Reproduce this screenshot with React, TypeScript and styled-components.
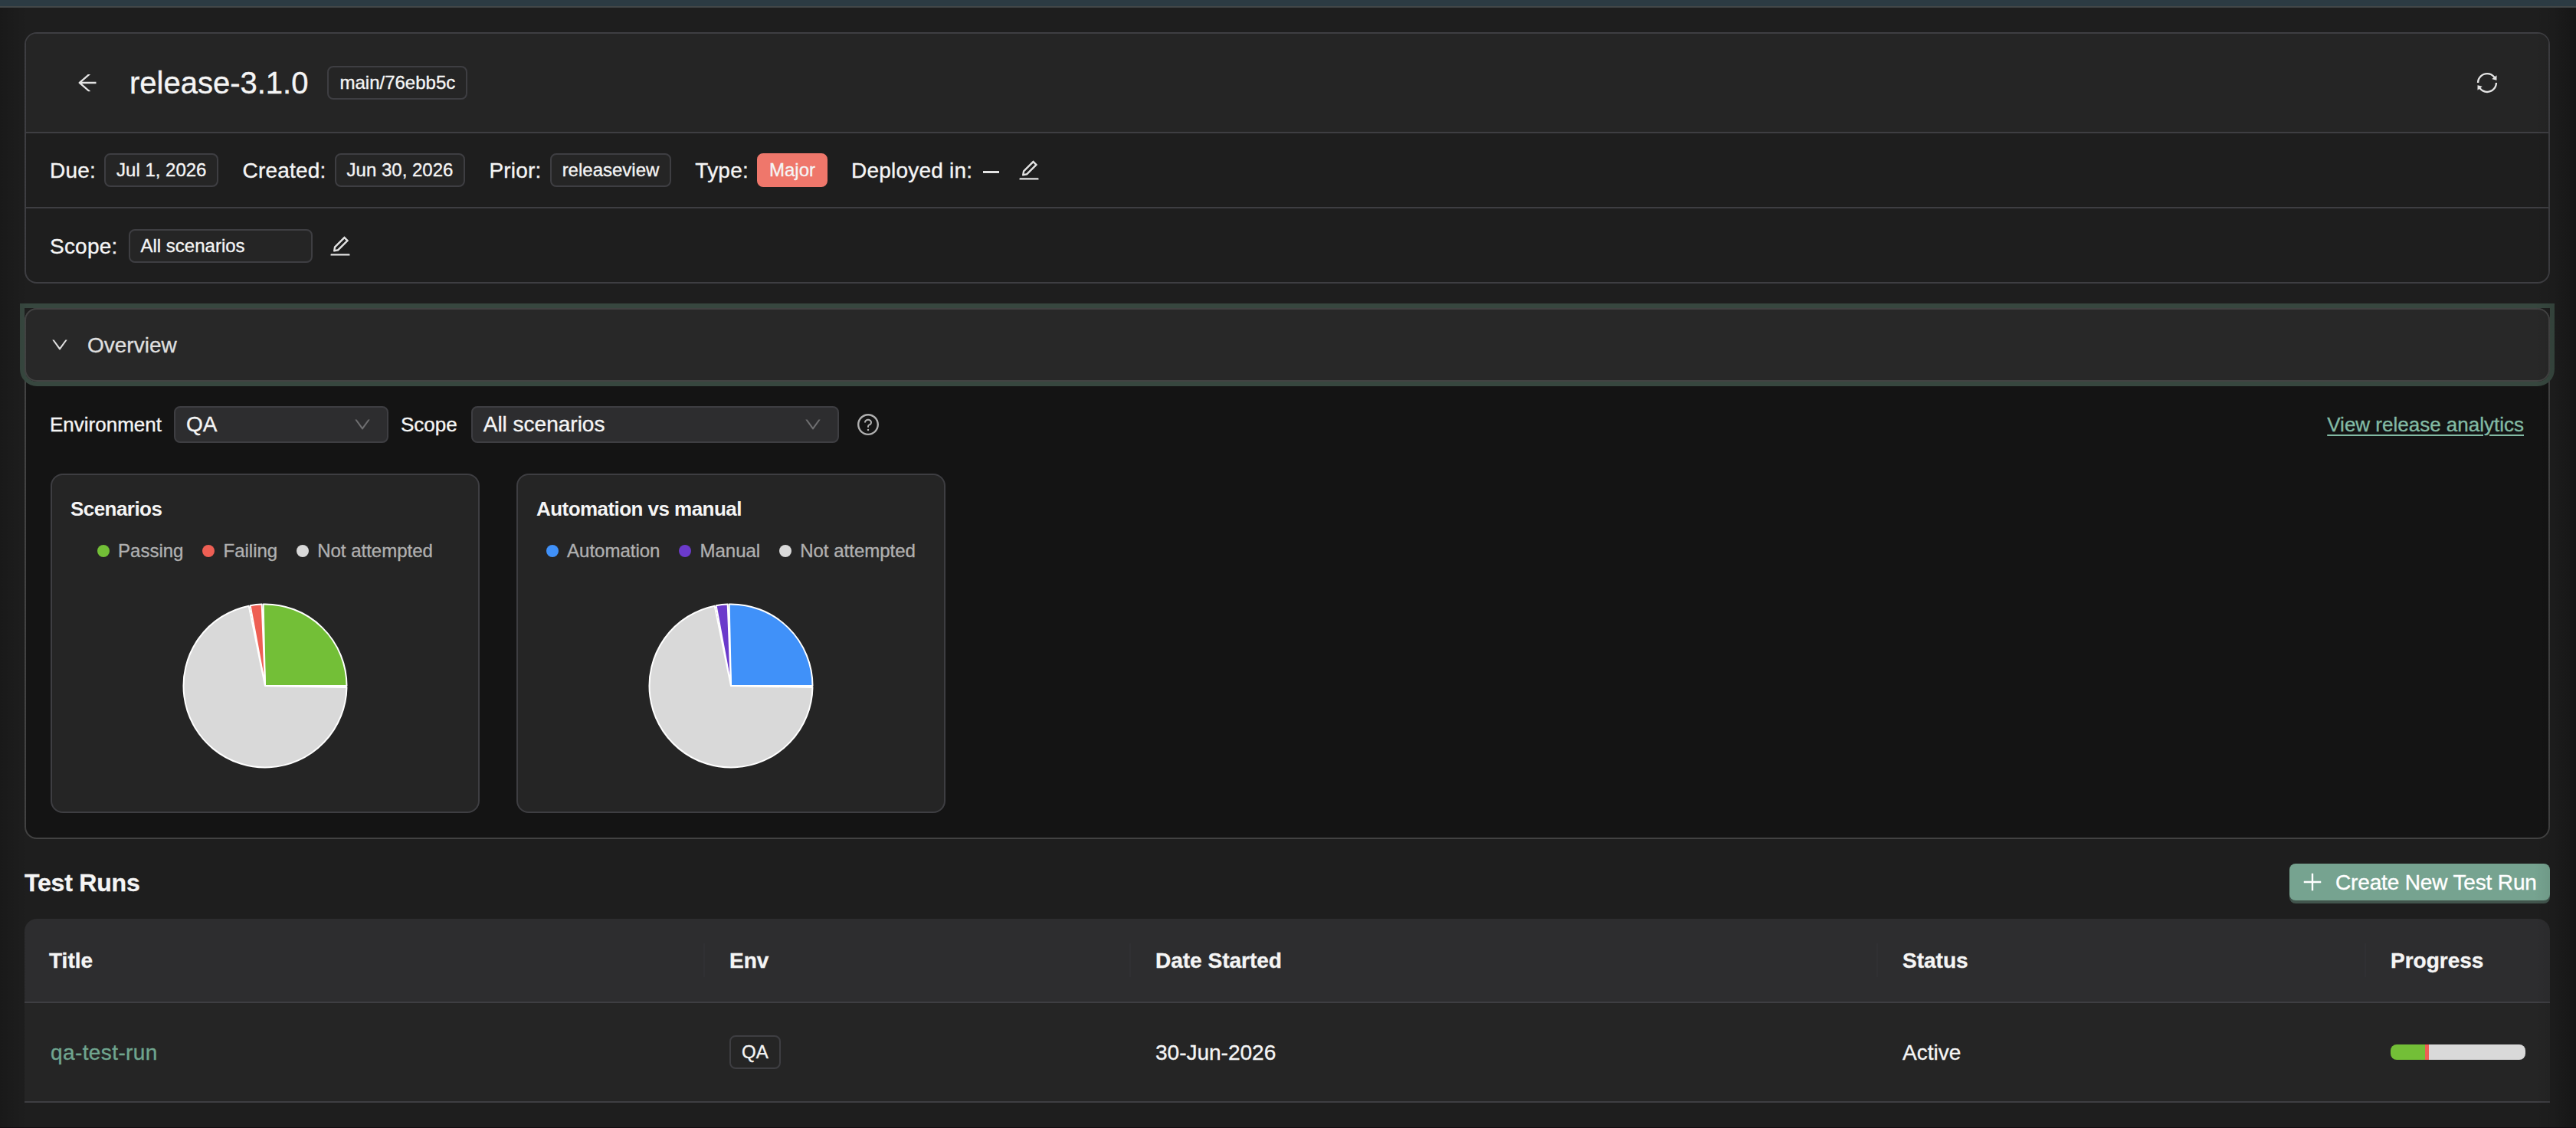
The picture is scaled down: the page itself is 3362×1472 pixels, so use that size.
import React from 'react';
import styled, { createGlobalStyle } from 'styled-components';
import {
  AiOutlineArrowLeft,
  AiOutlineSync,
  AiOutlineEdit,
  AiOutlineDown,
  AiOutlineQuestionCircle,
  AiOutlinePlus,
} from 'react-icons/ai';

const colors = {
  page: '#1e1e1e',
  card: '#252525',
  panel: '#141414',
  raised: '#2d2d2f',
  border: '#3e3e42',
  text: '#f5f5f5',
  muted: '#b0b0b0',
  green: '#73bf37',
  red: '#ee5f54',
  blue: '#4091f9',
  purple: '#6b3acb',
  grey: '#d9d9d9',
};

const GlobalStyle = createGlobalStyle`
  * {
    box-sizing: border-box;
  }
  body {
    margin: 0;
    background: ${colors.page};
    color: ${colors.text};
    font-family: "Liberation Sans", Helvetica, Arial, sans-serif;
    font-size: 28px;
    line-height: 44px;
    -webkit-text-stroke: 0.35px;
  }
`;

const Page = styled.div`
  position: relative;
  height: 1472px;
  overflow: hidden;
  border-bottom: 1px solid #120d11;
`;

const TopBar = styled.div`
  height: 10px;
  background: #2c3b43;
  border-bottom: 2px solid #424748;
`;

// darkens the page towards its left and right edges
const EdgeShade = styled.div`
  position: absolute;
  inset: 10px 0 0;
  pointer-events: none;
  background: linear-gradient(
    to right,
    rgba(0, 0, 0, 0.17),
    rgba(0, 0, 0, 0) 36px,
    rgba(0, 0, 0, 0) calc(100% - 54px),
    rgba(0, 0, 0, 0.07) calc(100% - 30px),
    rgba(0, 0, 0, 0.28)
  );
`;

const Content = styled.main`
  padding: 32px 34px 0 32px;
`;

const ReleaseCard = styled.section`
  height: 328px;
  border: 2px solid ${colors.border};
  border-radius: 16px;
  overflow: hidden;
`;

const ReleaseHeader = styled.header`
  display: flex;
  align-items: center;
  height: 130px;
  padding: 0 64px;
  background: ${colors.card};
  border-bottom: 2px solid ${colors.border};

  h1 {
    margin: 0 25px 0 39px;
    font-size: 40px;
    font-weight: 400;
  }
`;

const IconButton = styled.button<{ $right?: boolean }>`
  display: flex;
  padding: 0;
  border: 0;
  background: none;
  color: #e3e3e3;
  font-size: 32px;
  margin-left: ${({ $right }) => ($right ? 'auto' : '0')};
`;

const MetaRow = styled.div`
  display: flex;
  align-items: center;
  gap: 31px;
  height: 96px;
  padding: 0 31px;

  & + & {
    height: 98px;
    gap: 20px;
    padding-top: 2px;
    border-top: 2px solid ${colors.border};
  }
`;

const Field = styled.div`
  display: flex;
  align-items: center;
  gap: 11px;
`;

const Label = styled.span`
  padding-top: 1px;
  letter-spacing: 0.22px;
`;

const Tag = styled.span<{ $fill?: string; $wide?: boolean }>`
  height: 44px;
  width: ${({ $wide }) => ($wide ? '240px' : 'auto')};
  margin-left: ${({ $wide }) => ($wide ? '3px' : '0')};
  padding: 0 14px;
  border: 2px solid ${({ $fill }) => $fill || colors.border};
  border-radius: 8px;
  background: ${({ $fill }) => $fill || colors.card};
  font-size: 24px;
  line-height: 40px;
`;

const Dash = styled.span`
  width: 21px;
  height: 3px;
  margin: 4px 12px 0 3px;
  background: #e3e3e3;
`;

const Overview = styled.section`
  height: 693px;
  margin-top: 32px;
  border: 2px solid #424242;
  border-radius: 16px;
  background: ${colors.panel};
`;

const FocusRing = styled.div`
  margin: -2px -2px 0;
  border-radius: 0 0 16px 16px;
  box-shadow: 0 0 0 6px #37473f;
`;

const OverviewHeader = styled.div`
  display: flex;
  align-items: center;
  gap: 23px;
  height: 96px;
  padding: 0 31px;
  border: 2px solid #424242;
  border-radius: 16px;
  background: #282828;
  color: #dfdfdf;
`;

const Filters = styled.div`
  display: flex;
  align-items: center;
  gap: 16px;
  padding: 32px 32px 0 31px;
  font-size: 26px;
`;

const ScopeLabel = styled.span`
  margin-right: 2px;
`;

const Select = styled.div<{ $width: number }>`
  display: flex;
  align-items: center;
  justify-content: space-between;
  width: ${({ $width }) => $width}px;
  height: 48px;
  padding: 0 19px 0 14px;
  border: 2px solid ${colors.border};
  border-radius: 8px;
  background: ${colors.raised};
  font-size: 28px;

  svg {
    color: #6e6e70;
    font-size: 26px;
  }
`;

const HelpIcon = styled(AiOutlineQuestionCircle)`
  margin-left: 6px;
  color: ${colors.muted};
  font-size: 32px;
`;

const AnalyticsLink = styled.a`
  margin-left: auto;
  color: #82baa4;
  text-decoration: underline;
  text-decoration-thickness: 2px;
  text-underline-offset: 4px;
`;

const Charts = styled.div`
  display: flex;
  gap: 48px;
  padding: 40px 32px 0;
`;

const ChartCard = styled.article`
  width: 560px;
  height: 443px;
  padding: 22px 24px;
  border: 2px solid ${colors.border};
  border-radius: 16px;
  background: ${colors.card};

  h3 {
    margin: 0;
    font-size: 26px;
    letter-spacing: -0.55px;
    -webkit-text-stroke: 0;
  }
`;

const Legend = styled.div`
  display: flex;
  justify-content: center;
  gap: 25px;
  margin-top: 11px;
  color: ${colors.muted};
  font-size: 24px;
`;

const LegendItem = styled.span<{ $color: string }>`
  display: flex;
  align-items: center;
  gap: 11px;
  white-space: nowrap;

  &::before {
    content: '';
    width: 16px;
    height: 16px;
    border-radius: 50%;
    background: ${({ $color }) => $color};
  }
`;

const Pie = styled.svg`
  display: block;
  margin: 46px auto 0;
`;

const RunsHeader = styled.div`
  display: flex;
  align-items: center;
  justify-content: space-between;
  margin-top: 32px;

  h2 {
    margin: 0;
    padding-top: 2px;
    font-size: 32px;
    letter-spacing: -0.2px;
  }
`;

const CreateButton = styled.button`
  display: flex;
  align-items: center;
  gap: 14px;
  width: 340px;
  height: 48px;
  padding: 0 14px;
  border: 0;
  border-radius: 8px;
  background: #76a390;
  box-shadow: 0 4px 0 #42554d;
  color: #fff;
  font: inherit;
  letter-spacing: -0.15px;
  white-space: nowrap;

  svg {
    flex: none;
    font-size: 32px;
  }
`;

const Table = styled.div`
  margin-top: 24px;
  border-radius: 16px 16px 0 0;
  overflow: hidden;
`;

const TableRow = styled.div<{ $head?: boolean }>`
  display: grid;
  grid-template-columns: 888px 556px 975px 637px 240px;
  align-items: center;
  height: ${({ $head }) => ($head ? 110 : 130)}px;
  border-bottom: 2px solid ${colors.border};
  background: ${({ $head }) => ($head ? colors.raised : colors.card)};
  font-weight: ${({ $head }) => ($head ? 700 : 400)};
`;

const Cell = styled.div<{ $divider?: boolean }>`
  display: flex;
  align-items: center;
  height: 44px;
  padding: 0 32px;
  border-right: ${({ $divider }) => ($divider ? '2px solid #303033' : 'none')};
`;

const CellText = styled.span`
  padding-top: 1px;
`;

const RunLink = styled.a`
  padding: 1px 0 0 2px;
  color: #70a58f;
  letter-spacing: 0.4px;
`;

const Progress = styled.div`
  display: flex;
  width: 176px;
  height: 20px;
  border-radius: 8px;
  overflow: hidden;
`;

const Bar = styled.span<{ $color: string }>`
  background: ${({ $color }) => $color};
`;

type Slice = { label: string; count: number; color: string };

const scenarios: Slice[] = [
  { label: 'Passing', count: 10, color: colors.green },
  { label: 'Failing', count: 1, color: colors.red },
  { label: 'Not attempted', count: 28, color: colors.grey },
];

const automation: Slice[] = [
  { label: 'Automation', count: 10, color: colors.blue },
  { label: 'Manual', count: 1, color: colors.purple },
  { label: 'Not attempted', count: 28, color: colors.grey },
];

// slices run counter-clockwise from three o'clock, with a small gap after each
function PieChart({ data }: { data: Slice[] }) {
  const total = data.reduce((sum, s) => sum + s.count, 0);
  const r = 106.5;
  const gap = 0.018;
  let angle = 0;

  return (
    <Pie width="216" height="216" viewBox="-108 -108 216 216">
      {data.map((s) => {
        const start = angle;
        angle -= (s.count / total) * Math.PI * 2;
        const end = angle + gap;
        const large = s.count / total > 0.5 ? 1 : 0;
        return (
          <path
            key={s.label}
            d={`M0 0L${r * Math.cos(start)} ${r * Math.sin(start)}A${r} ${r} 0 ${large} 0 ${r * Math.cos(end)} ${r * Math.sin(end)}Z`}
            fill={s.color}
            stroke="#fff"
            strokeWidth="2"
            strokeLinejoin="round"
          />
        );
      })}
    </Pie>
  );
}

function Chart({ title, data }: { title: string; data: Slice[] }) {
  return (
    <ChartCard>
      <h3>{title}</h3>
      <Legend>
        {data.map((s) => (
          <LegendItem key={s.label} $color={s.color}>
            {s.label}
          </LegendItem>
        ))}
      </Legend>
      <PieChart data={data} />
    </ChartCard>
  );
}

const columns = ['Title', 'Env', 'Date Started', 'Status', 'Progress'];

function App() {
  const total = scenarios.reduce((sum, s) => sum + s.count, 0);

  return (
    <Page>
      <GlobalStyle />
      <TopBar />
      <Content>
        <ReleaseCard>
          <ReleaseHeader>
            <IconButton aria-label="Back">
              <AiOutlineArrowLeft />
            </IconButton>
            <h1>release-3.1.0</h1>
            <Tag>main/76ebb5c</Tag>
            <IconButton $right aria-label="Refresh">
              <AiOutlineSync />
            </IconButton>
          </ReleaseHeader>
          <MetaRow>
            <Field>
              <Label>Due:</Label>
              <Tag>Jul 1, 2026</Tag>
            </Field>
            <Field>
              <Label>Created:</Label>
              <Tag>Jun 30, 2026</Tag>
            </Field>
            <Field>
              <Label>Prior:</Label>
              <Tag>releaseview</Tag>
            </Field>
            <Field>
              <Label>Type:</Label>
              <Tag $fill="#ef776b">Major</Tag>
            </Field>
            <Field>
              <Label>Deployed in:</Label>
              <Dash />
              <IconButton aria-label="Edit deployment">
                <AiOutlineEdit />
              </IconButton>
            </Field>
          </MetaRow>
          <MetaRow>
            <Field>
              <Label>Scope:</Label>
              <Tag $wide>All scenarios</Tag>
            </Field>
            <IconButton aria-label="Edit scope">
              <AiOutlineEdit />
            </IconButton>
          </MetaRow>
        </ReleaseCard>

        <Overview>
          <FocusRing>
            <OverviewHeader>
              <AiOutlineDown size={26} />
              <CellText>Overview</CellText>
            </OverviewHeader>
          </FocusRing>
          <Filters>
            Environment
            <Select $width={280}>
              QA <AiOutlineDown />
            </Select>
            <ScopeLabel>Scope</ScopeLabel>
            <Select $width={480}>
              All scenarios <AiOutlineDown />
            </Select>
            <HelpIcon />
            <AnalyticsLink>View release analytics</AnalyticsLink>
          </Filters>
          <Charts>
            <Chart title="Scenarios" data={scenarios} />
            <Chart title="Automation vs manual" data={automation} />
          </Charts>
        </Overview>

        <RunsHeader>
          <h2>Test Runs</h2>
          <CreateButton>
            <AiOutlinePlus />
            <CellText>Create New Test Run</CellText>
          </CreateButton>
        </RunsHeader>
        <Table>
          <TableRow $head>
            {columns.map((name, i) => (
              <Cell key={name} $divider={i < columns.length - 1}>
                <CellText>{name}</CellText>
              </Cell>
            ))}
          </TableRow>
          <TableRow>
            <Cell>
              <RunLink>qa-test-run</RunLink>
            </Cell>
            <Cell>
              <Tag>QA</Tag>
            </Cell>
            <Cell>
              <CellText>30-Jun-2026</CellText>
            </Cell>
            <Cell>
              <CellText>Active</CellText>
            </Cell>
            <Cell>
              <Progress>
                {scenarios.map((s) => (
                  <Bar key={s.label} $color={s.color} style={{ width: `${(s.count / total) * 100}%` }} />
                ))}
              </Progress>
            </Cell>
          </TableRow>
        </Table>
      </Content>
      <EdgeShade />
    </Page>
  );
}

export default App;
